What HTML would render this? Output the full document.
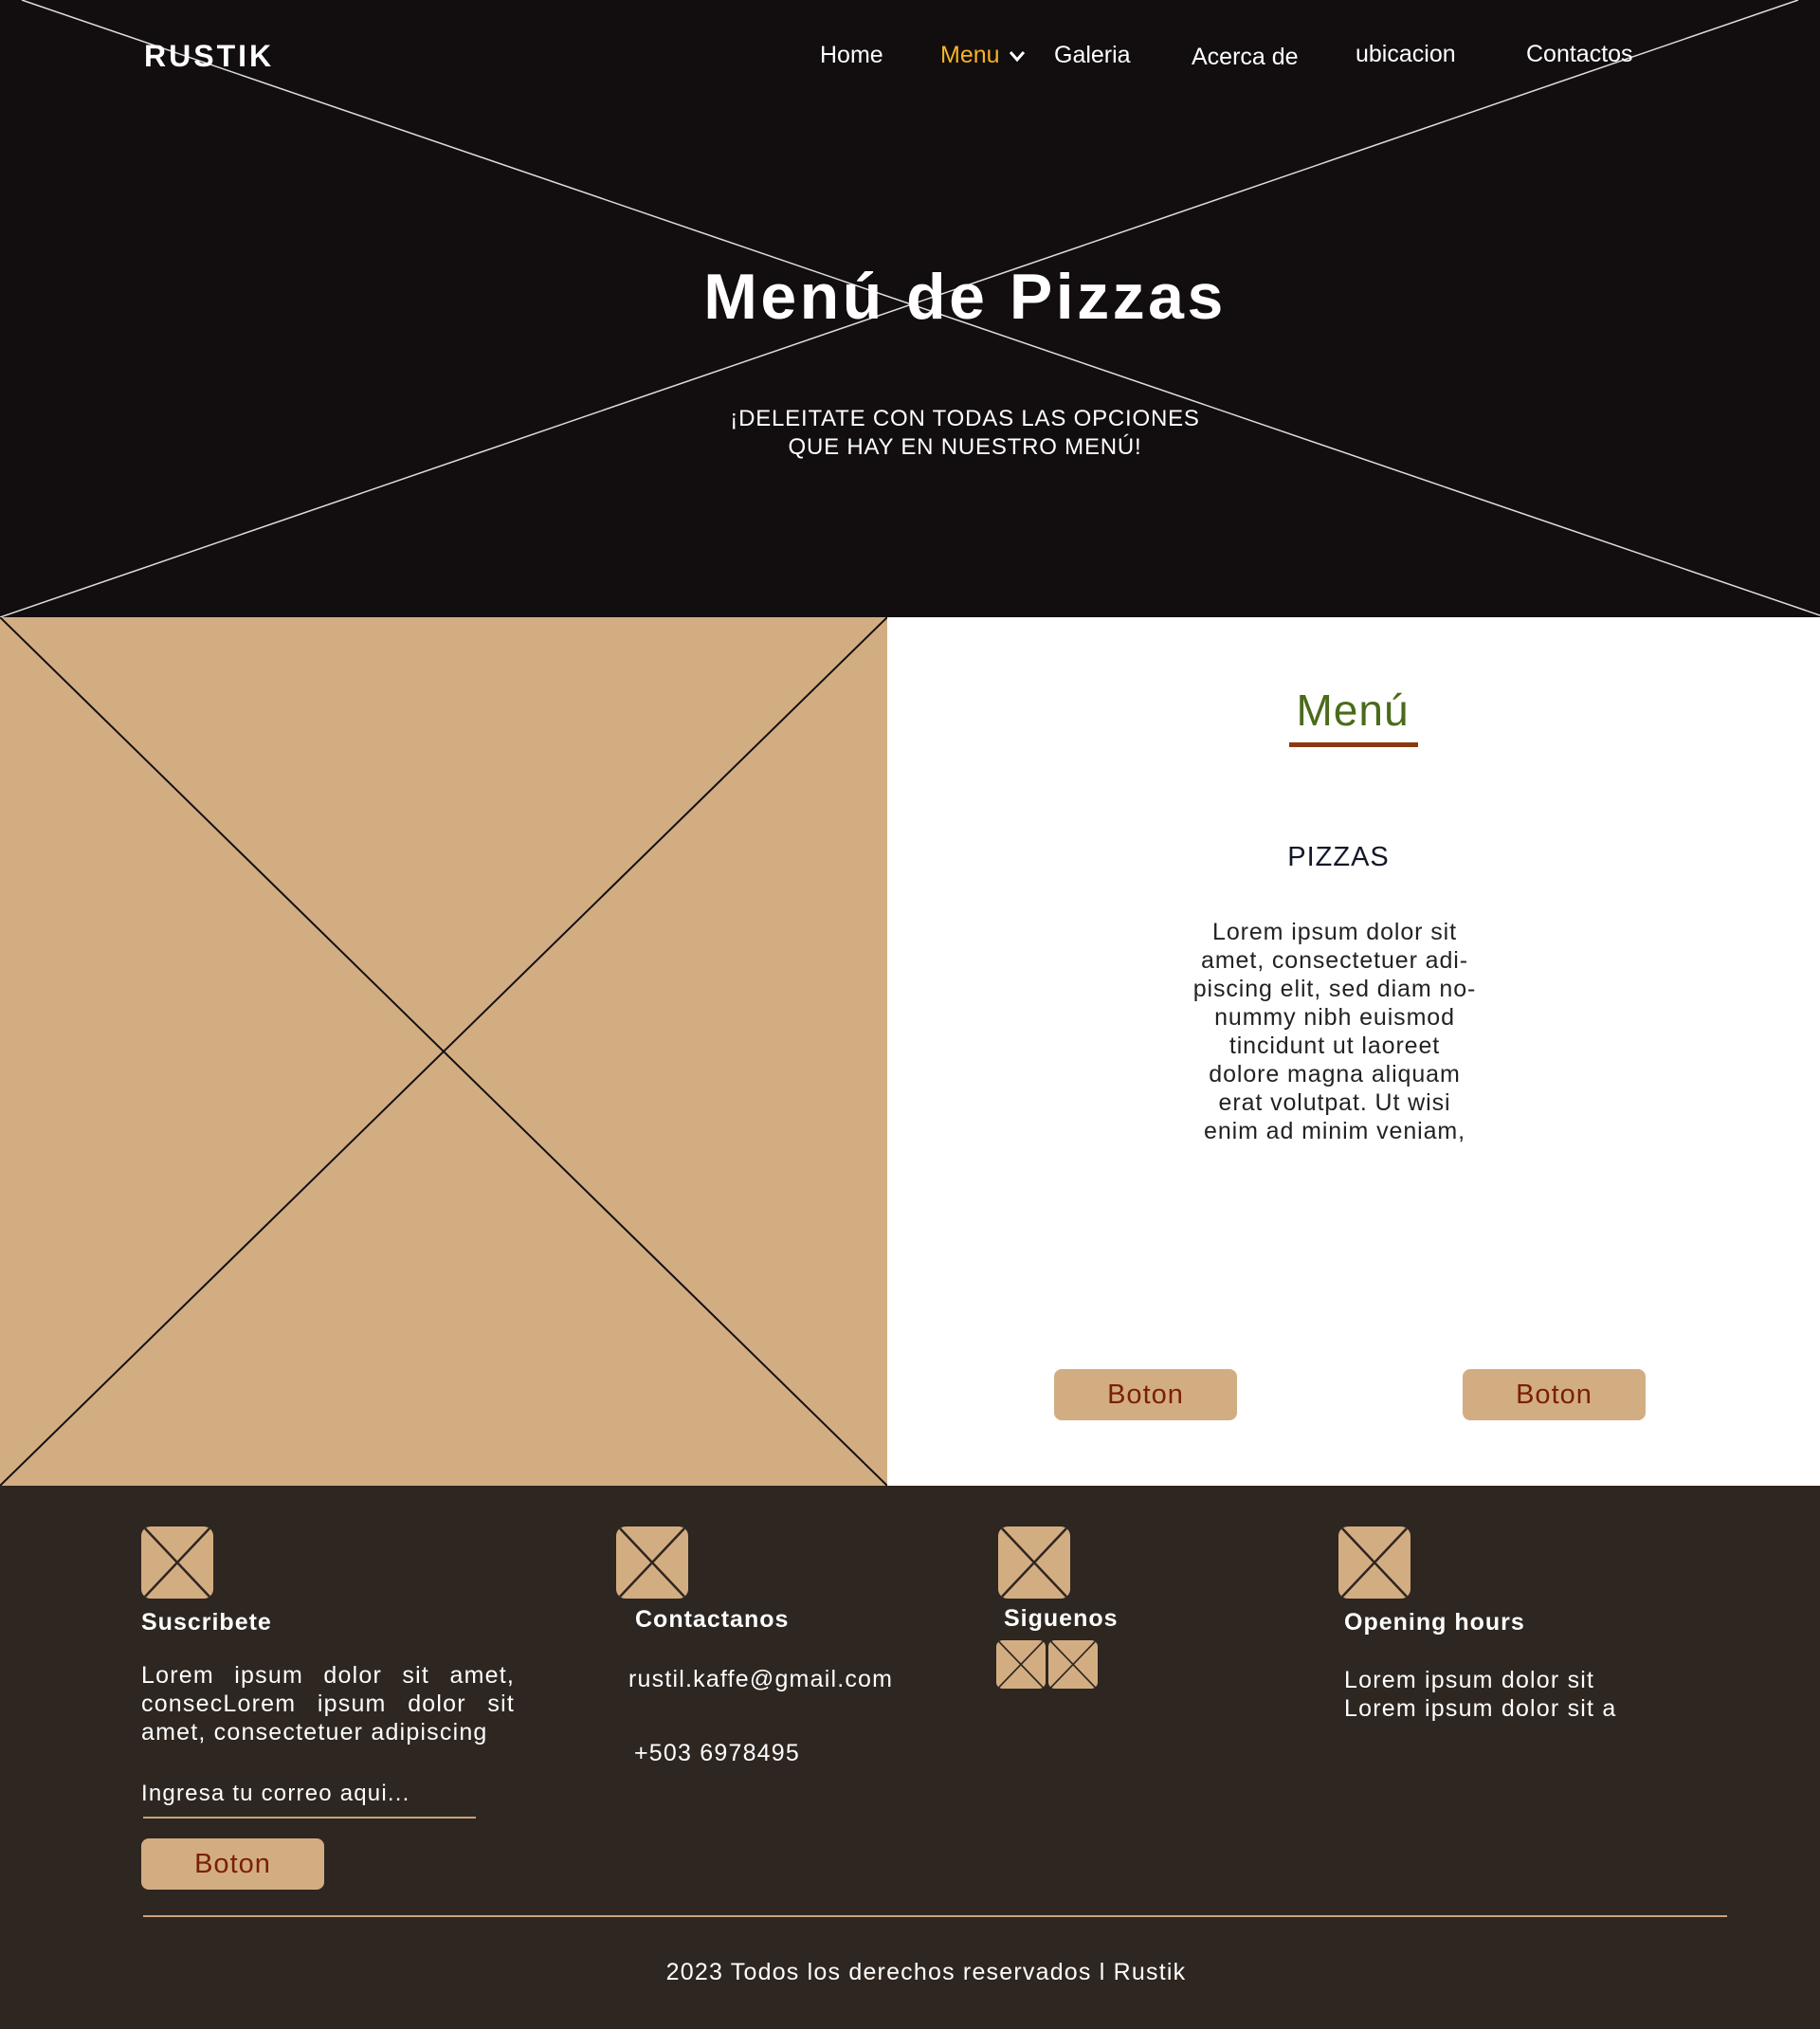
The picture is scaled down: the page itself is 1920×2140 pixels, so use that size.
<!DOCTYPE html>
<html><head><meta charset="utf-8"><style>
*{margin:0;padding:0;box-sizing:border-box}
body{width:1920px;height:2140px;position:relative;font-family:"Liberation Sans",sans-serif;background:#fff;overflow:hidden}
.a{position:absolute;white-space:nowrap}
.hdr{position:absolute;left:0;top:0;width:1920px;height:651px;background:#120e0f}
.nav{color:#fff;font-size:25px;top:44px}
.img{position:absolute;left:0;top:651px;width:936px;height:916px;background:#d3ad82}
.ft{position:absolute;left:0;top:1567px;width:1920px;height:573px;background:#2e2620}
.btn{position:absolute;width:193px;height:54px;background:#d3ad82;border-radius:8px;color:#7a1f05;font-size:29px;text-align:center;line-height:54px;letter-spacing:1px}
.ic{position:absolute;width:76px;height:76px}
.fh{color:#fff;font-weight:bold;font-size:25px;letter-spacing:1px}
.fp{color:#fff;font-size:25px;letter-spacing:1.2px}
</style></head><body>
<div class="hdr"></div>
<svg class="a" style="left:0;top:0" width="1920" height="651"><line x1="23" y1="0" x2="1920" y2="649" stroke="#ddd" stroke-width="1.5"/><line x1="0" y1="651" x2="1897" y2="0" stroke="#ddd" stroke-width="1.5"/></svg>
<div class="a" style="left:152px;top:41px;color:#fff;font-weight:bold;font-size:32px;letter-spacing:3px">RUSTIK</div>
<div class="a nav" style="left:865px">Home</div>
<div class="a nav" style="left:992px;color:#f5b324">Menu</div>
<svg class="a" style="left:1064px;top:52px" width="18" height="14"><path d="M2 3 L9 11 L16 3" stroke="#fff" stroke-width="3" fill="none"/></svg>
<div class="a nav" style="left:1112px">Galeria</div>
<div class="a nav" style="left:1257px;top:46px">Acerca de</div>
<div class="a nav" style="left:1430px;top:43px">ubicacion</div>
<div class="a nav" style="left:1610px;top:43px">Contactos</div>
<div class="a" style="left:0;width:2036px;text-align:center;top:274px;color:#fff;font-weight:bold;font-size:68px;letter-spacing:3.5px">Menú de Pizzas</div>
<div class="a" style="left:0;width:2036px;text-align:center;top:427px;color:#fff;font-size:24px;line-height:30px;letter-spacing:0.8px">¡DELEITATE CON TODAS LAS OPCIONES<br>QUE HAY EN NUESTRO MENÚ!</div>
<div class="img"></div>
<svg class="a" style="left:0;top:651px" width="936" height="916"><line x1="0" y1="0" x2="936" y2="916" stroke="#111" stroke-width="2"/><line x1="0" y1="916" x2="936" y2="0" stroke="#111" stroke-width="2"/></svg>
<div class="a" style="left:1327px;width:200px;text-align:center;top:722px;color:#4a6b1a;font-size:46px;letter-spacing:1px">Menú</div>
<div class="a" style="left:1360px;top:783px;width:136px;height:5px;background:#8b3a0f"></div>
<div class="a" style="left:1312px;width:200px;text-align:center;top:888px;color:#111827;font-size:29px;letter-spacing:1px">PIZZAS</div>
<div class="a" style="left:1208px;width:400px;text-align:center;top:968px;color:#222;font-size:25px;line-height:30px;letter-spacing:0.9px">Lorem ipsum dolor sit<br>amet, consectetuer adi-<br>piscing elit, sed diam no-<br>nummy nibh euismod<br>tincidunt ut laoreet<br>dolore magna aliquam<br>erat volutpat. Ut wisi<br>enim ad minim veniam,</div>
<div class="btn" style="left:1112px;top:1444px">Boton</div>
<div class="btn" style="left:1543px;top:1444px">Boton</div>
<div class="ft"></div>
<svg width="0" height="0" style="position:absolute"><defs><symbol id="x" viewBox="0 0 76 76"><rect width="76" height="76" rx="10" fill="#d3ad82"/><path d="M4 2L72 74M72 2L4 74" stroke="#2e2620" stroke-width="2.5"/></symbol></defs></svg>
<svg class="ic" style="left:149px;top:1610px"><use href="#x"/></svg>
<svg class="ic" style="left:650px;top:1610px"><use href="#x"/></svg>
<svg class="ic" style="left:1053px;top:1610px"><use href="#x"/></svg>
<svg class="ic" style="left:1412px;top:1610px"><use href="#x"/></svg>
<svg class="ic" style="left:1051px;top:1730px;width:52px;height:51px" viewBox="0 0 76 76" preserveAspectRatio="none"><use href="#x"/></svg>
<svg class="ic" style="left:1106px;top:1730px;width:52px;height:51px" viewBox="0 0 76 76" preserveAspectRatio="none"><use href="#x"/></svg>
<div class="a fh" style="left:149px;top:1697px">Suscribete</div>
<div class="a fh" style="left:670px;top:1694px">Contactanos</div>
<div class="a fh" style="left:1059px;top:1693px">Siguenos</div>
<div class="a fh" style="left:1418px;top:1697px">Opening hours</div>
<div class="a fp" style="left:149px;top:1752px;width:394px;white-space:normal;text-align:justify;line-height:30px">Lorem ipsum dolor sit amet, consecLorem ipsum dolor sit amet, consectetuer adipiscing</div>
<div class="a fp" style="left:663px;top:1757px">rustil.kaffe@gmail.com</div>
<div class="a fp" style="left:669px;top:1835px">+503 6978495</div>
<div class="a fp" style="left:1418px;top:1757px;line-height:30px">Lorem ipsum dolor sit<br>Lorem ipsum dolor sit a</div>
<div class="a fp" style="left:149px;top:1878px;font-size:24px">Ingresa tu correo aqui...</div>
<div class="a" style="left:151px;top:1916px;width:351px;height:2px;background:#c9a47a"></div>
<div class="btn" style="left:149px;top:1939px">Boton</div>
<div class="a" style="left:151px;top:2020px;width:1671px;height:2px;background:#c9a47a"></div>
<div class="a fp" style="left:0;width:1954px;text-align:center;top:2066px">2023 Todos los derechos reservados l Rustik</div>
</body></html>
